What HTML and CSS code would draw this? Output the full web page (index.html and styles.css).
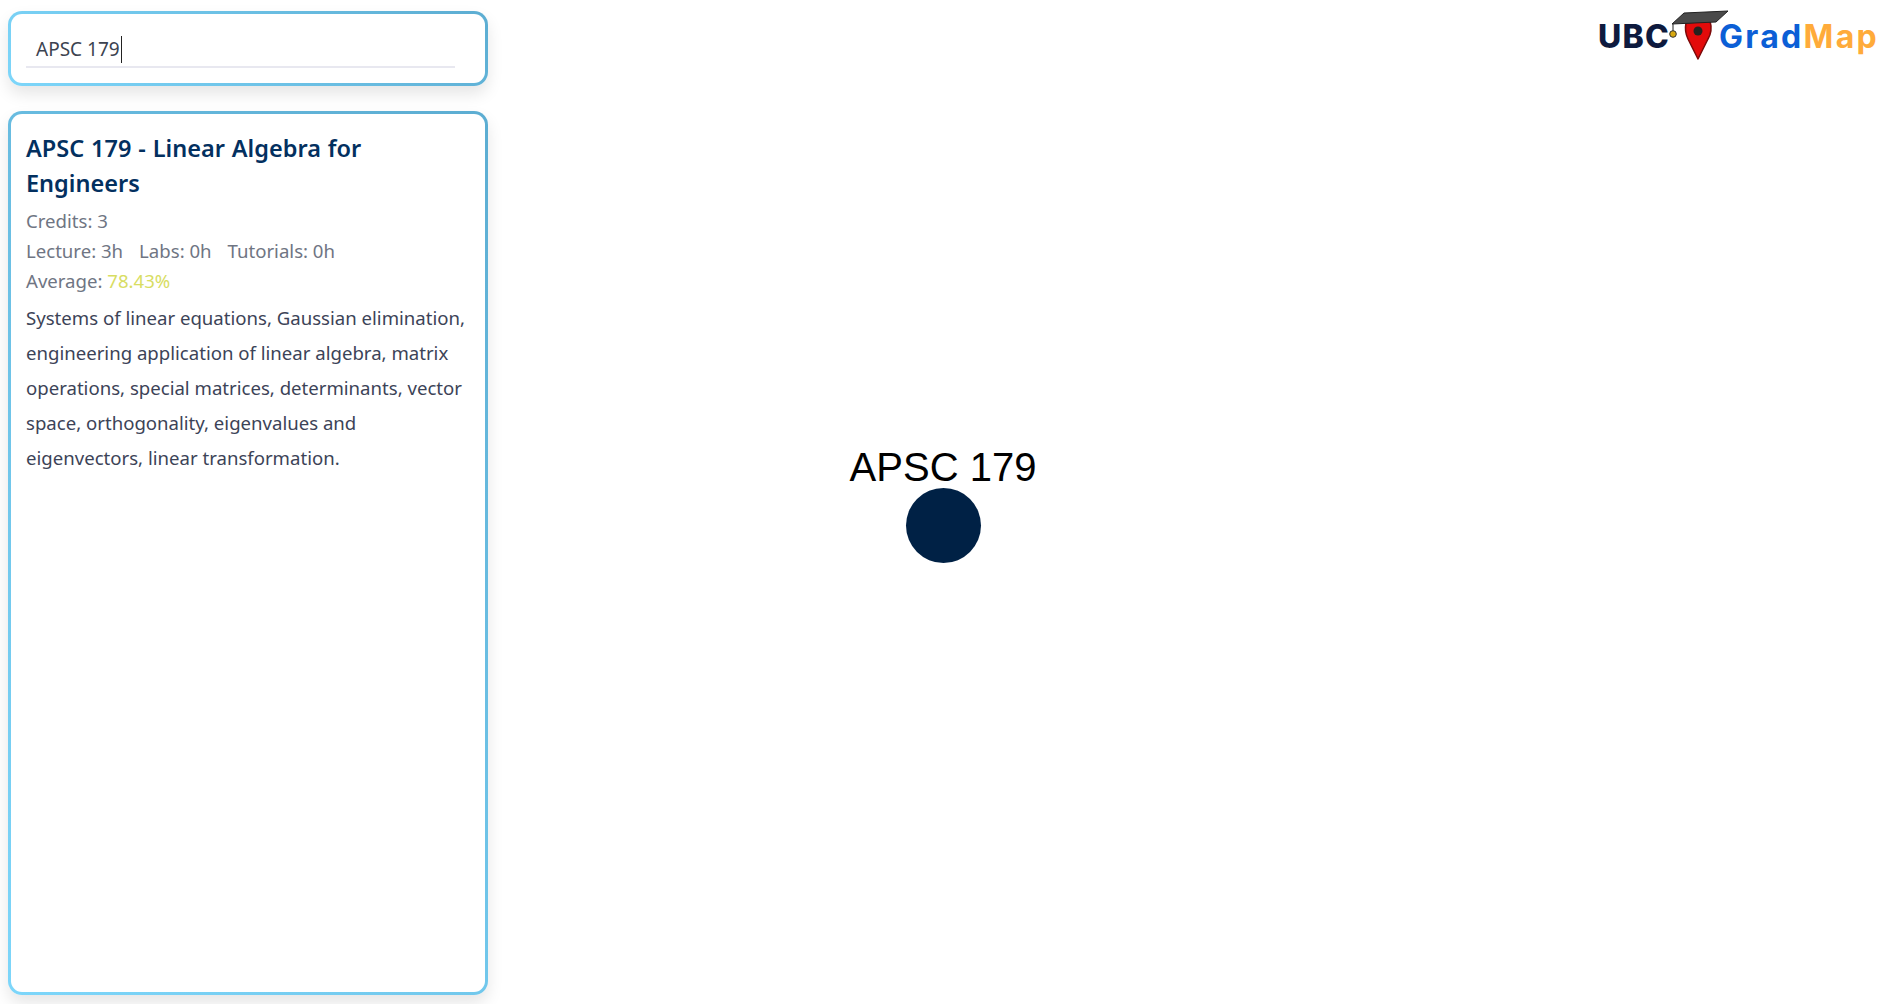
FILE: index.html
```html
<!DOCTYPE html>
<html lang="en">

<head>
    <meta charset="UTF-8">
    <meta name="viewport" content="width=device-width, initial-scale=1.0">
    <title>UBC GradMap</title>
    <link rel="stylesheet" href="styles.css">
</head>

<body>
    <aside class="sidebar">
        <div class="panel search-panel">
            <div class="search-field">
                <span class="search-text">APSC 179</span><span class="caret"></span>
            </div>
        </div>
        <section class="panel course-panel">
            <h1 class="course-title">APSC 179 - Linear Algebra for Engineers</h1>
            <p class="course-meta">Credits: 3</p>
            <p class="course-meta hours">
                <span>Lecture: 3h</span>
                <span>Labs: 0h</span>
                <span>Tutorials: 0h</span>
            </p>
            <p class="course-meta">Average: <span class="average">78.43%</span></p>
            <p class="course-desc">Systems of linear equations, Gaussian elimination, engineering application of linear algebra, matrix operations, special matrices, determinants, vector space, orthogonality, eigenvalues and eigenvectors, linear transformation.</p>
        </section>
    </aside>

    <main class="graph">
        <header class="logo">
            <span class="logo-ubc">UBC</span>
            <svg class="logo-icon" width="70" height="60" viewBox="0 0 70 60">
                <path d="M32 55 L22 35 C19 29 19 24 20 19 L44 17 C46 24 45 30 42 35 Z" fill="#e30b0b" stroke="#7c0a0a" stroke-width="1.5" stroke-linejoin="round" />
                <circle cx="32" cy="27" r="4.5" fill="#26221f" />
                <path d="M6 20 L18 9 L62 7 L50 18 Z" fill="#4a4a4a" stroke="#222" stroke-width="1" stroke-linejoin="round" />
                <path d="M7 20 V27" stroke="#222" stroke-width="1" fill="none" />
                <circle cx="7" cy="30" r="3.3" fill="#d8a80f" stroke="#333" stroke-width="1" />
            </svg>
            <span class="logo-grad">Grad</span><span class="logo-map">Map</span>
        </header>
        <div class="node">
            <span class="node-label">APSC 179</span>
            <span class="node-dot"></span>
        </div>
    </main>
</body>

</html>
```

FILE: styles.css
```css
* {
    padding: 0;
    margin: 0;
    box-sizing: border-box;
}

html,
body {
    height: 100%;
    overflow: hidden;
}

body {
    display: flex;
    background: #fff;
    font-family: "Noto Sans", sans-serif;
}

.sidebar {
    width: 496px;
    height: 1004px;
    flex: none;
    display: flex;
    flex-direction: column;
    gap: 25px;
    padding: 11px 8px 9px 8px;
}

.panel {
    border: 3px solid transparent;
    border-radius: 14px;
    background: linear-gradient(#fff, #fff) padding-box,
        linear-gradient(45deg, #7dd6fa, #5cadd2) border-box;
    box-shadow: 0 8px 16px rgba(0, 0, 0, 0.1);
}

.search-panel {
    height: 75px;
    padding: 15px 30px 0 15px;
    flex: none;
}

.search-field {
    height: 39px;
    padding: 3px 0 0 10px;
    display: flex;
    align-items: center;
    border-bottom: 2px solid #e8e8f0;
    font-size: 19px;
    color: #3c4350;
}

.caret {
    width: 1px;
    height: 27px;
    margin-left: 1px;
    background: #222;
}

.course-panel {
    flex: 1;
    padding: 3px 15px;
}

.course-title {
    font-size: 23.5px;
    line-height: 35px;
    font-weight: 600;
    word-spacing: 0.8px;
    color: #03305f;
    margin: 14px 0 5px;
}

.course-meta {
    font-size: 18.6px;
    line-height: 30px;
    color: #6f7583;
}

.hours {
    display: flex;
    gap: 16px;
}

.average {
    color: #d8dd62;
}

.course-desc {
    margin-top: 4px;
    font-size: 18.6px;
    line-height: 35px;
    color: #3c4357;
}

.graph {
    flex: 1;
    position: relative;
}

.logo {
    display: flex;
    justify-content: flex-end;
    align-items: center;
    height: 72px;
    padding-right: 19px;
    font-family: "Inter", sans-serif;
    font-size: 32px;
    font-weight: 700;
    letter-spacing: 1.6px;
}

.logo-ubc {
    color: #0e1a3e;
    font-weight: 800;
    letter-spacing: 1.2px;
}

.logo-icon {
    margin: 0 -17px 4px -4px;
    flex: none;
}

.logo-grad,
.logo-map {
    letter-spacing: 2.3px;
}

.logo-grad {
    color: #0c5fd6;
}

.logo-map {
    color: #ffab3a;
}

/* graph node sits on a free canvas */
.node {
    position: absolute;
    left: 353px;
    top: 444px;
    width: 188px;
    display: flex;
    flex-direction: column;
    align-items: center;
}

.node-label {
    font-family: "Liberation Sans", sans-serif;
    font-size: 40px;
    line-height: 46px;
    color: #000;
    white-space: nowrap;
}

.node-dot {
    width: 75px;
    height: 75px;
    margin-top: -2px;
    border-radius: 50%;
    background: #002145;
}
```
